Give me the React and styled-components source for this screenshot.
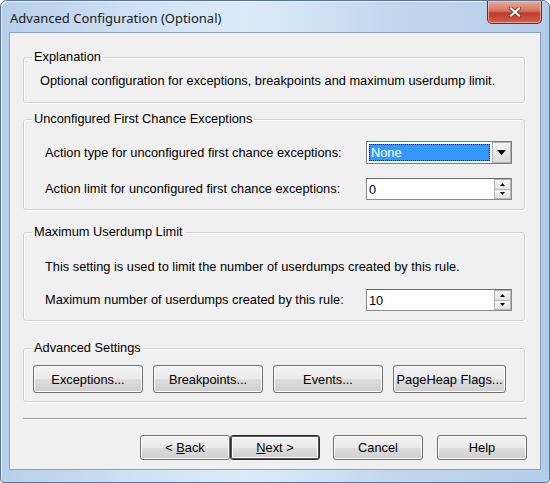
import React from "react";
import styled, { createGlobalStyle } from "styled-components";

const GlobalStyle = createGlobalStyle`
  html, body {
    margin: 0;
    padding: 0;
    background: #ffffff;
  }
  body {
    font-family: "Liberation Sans", Arial, sans-serif;
    font-size: 12.8px;
    color: #000;
  }
`;

const Frame = styled.div`
  width: 550px;
  height: 483px;
  box-sizing: border-box;
  display: flex;
  flex-direction: column;
  padding: 0 8px 12px 8px;
  border: 1px solid #5d7596;
  border-radius: 7px 7px 4px 4px;
  background: linear-gradient(
    to right,
    #b6cfea 0%,
    #cfe1f4 25%,
    #dcebf8 45%,
    #c3d8ef 70%,
    #b4cde9 100%
  );
  box-shadow: inset 1px 1px 0 #e8f1fa;
`;

const TitleBar = styled.div`
  height: 31px;
  display: flex;
  align-items: flex-start;
  justify-content: space-between;
`;

const Title = styled.div`
  font-family: "Noto Sans", "Open Sans", sans-serif;
  font-size: 13px;
  color: #1a1a1a;
  padding: 8px 0 0 1px;
`;

const CloseButton = styled.div`
  width: 55px;
  height: 23px;
  margin-right: -1px;
  box-sizing: border-box;
  border: 1px solid #6e2a22;
  border-top: none;
  border-radius: 0 0 5px 5px;
  background: linear-gradient(to bottom, #e9aa9c 0%, #d6725f 45%, #be3a2a 55%, #d2604a 100%);
  box-shadow: inset 0 0 0 1px rgba(255, 210, 200, 0.6);
  display: flex;
  align-items: center;
  justify-content: center;
`;

const Client = styled.div`
  flex: 1;
  display: flex;
  flex-direction: column;
  padding: 0 13px 0 13px;
  border: 1px solid #8aa0bd;
  background: #f0f0f0;
`;

const Group = styled.fieldset`
  margin: ${(p) => p.$top}px 2px 0 0;
  padding: 0 8px;
  border: 1px solid #cdd1d5;
  border-radius: 3px;
  box-shadow: inset 1px 1px 0 #fff, 1px 1px 0 #fff;
  min-width: 0;
`;

const Legend = styled.legend`
  padding: 0 2px;
  line-height: 14px;
  color: #000;
`;

const Body = styled.div`
  padding: ${(p) => p.$pad};
  display: flex;
  flex-direction: column;
  gap: ${(p) => p.$gap || 0}px;
`;

const Text = styled.div`
  line-height: 14px;
  white-space: nowrap;
`;

const Row = styled.div`
  display: grid;
  grid-template-columns: 1fr 146px;
  align-items: center;
  height: ${(p) => p.$h}px;
`;

const Combo = styled.div`
  height: 23px;
  box-sizing: border-box;
  border: 1px solid #7a7a7a;
  background: #fff;
  display: flex;
  align-items: stretch;
  padding: 2px;
  gap: 2px;
`;

const ComboValue = styled.div`
  flex: 1;
  background: #3399ff;
  color: #fff;
  outline: 1px dotted #000;
  outline-offset: -1px;
  padding-left: 2px;
  display: flex;
  align-items: center;
`;

const ComboArrow = styled.div`
  width: 17px;
  display: flex;
  align-items: center;
  justify-content: center;
  background: linear-gradient(to bottom, #f4f4f4, #dcdcdc);
  border: 1px solid #b0b0b0;
  margin: -2px -2px -2px 0;
`;

const Spin = styled.div`
  height: 22px;
  box-sizing: border-box;
  border: 1px solid #8b8b8b;
  border-top-color: #6b6b6b;
  background: #fff;
  display: flex;
`;

const SpinValue = styled.div`
  flex: 1;
  padding-left: 2px;
  display: flex;
  align-items: center;
`;

const SpinButtons = styled.div`
  width: 17px;
  display: flex;
  flex-direction: column;
`;

const SpinPart = styled.div`
  flex: 1;
  display: flex;
  align-items: center;
  justify-content: center;
  background: linear-gradient(to bottom, #f5f5f5, #e2e2e2);
  border: 1px solid #b5b5b5;
  margin: ${(p) => (p.$up ? "0" : "-1px 0 0 0")};
`;

const ButtonRow = styled.div`
  display: flex;
  gap: ${(p) => p.$gap}px;
  justify-content: ${(p) => p.$justify || "flex-start"};
  padding: ${(p) => p.$pad || 0};
  margin-top: ${(p) => p.$top || 0}px;
`;

const Button = styled.div`
  width: ${(p) => p.$w}px;
  height: ${(p) => p.$h}px;
  margin-left: ${(p) => p.$left || 0}px;
  box-sizing: border-box;
  border: 1px solid ${(p) => (p.$default ? "#2b2b2b" : "#707070")};
  box-shadow: ${(p) =>
    p.$default ? "inset 0 0 0 1px #555, inset 0 0 0 2px #fff" : "inset 0 0 0 1px #fcfcfc"};
  border-radius: 3px;
  background: linear-gradient(to bottom, #f2f2f2 0%, #ebebeb 50%, #dddddd 51%, #cfcfcf 100%);
  display: flex;
  align-items: center;
  justify-content: center;
  white-space: pre;
`;

const Separator = styled.div`
  margin-top: 16px;
  height: 0;
  border-top: 1px solid #a0a0a0;
  border-bottom: 1px solid #fff;
`;

const Key = styled.span`
  text-decoration: underline;
`;

const TriDown = ({ size = 4 }) => (
  <svg width={size * 2 + 1} height={size + 1} viewBox={`0 0 ${size * 2 + 1} ${size + 1}`}>
    <polygon points={`0,0 ${size * 2 + 1},0 ${size + 0.5},${size + 1}`} fill="#000" />
  </svg>
);

const TriUp = () => (
  <svg width="5" height="3" viewBox="0 0 5 3">
    <polygon points="0,3 5,3 2.5,0" fill="#000" />
  </svg>
);

const SpinBox = ({ value }) => (
  <Spin>
    <SpinValue>{value}</SpinValue>
    <SpinButtons>
      <SpinPart $up>
        <TriUp />
      </SpinPart>
      <SpinPart>
        <TriDown size={2} />
      </SpinPart>
    </SpinButtons>
  </Spin>
);

const App = () => {
  return (
    <>
      <GlobalStyle />
      <Frame>
        <TitleBar>
          <Title>Advanced Configuration (Optional)</Title>
          <CloseButton>
            <svg width="12" height="10" viewBox="0 0 12 10">
              <path
                d="M2 1.5 L10 8.5 M10 1.5 L2 8.5"
                stroke="#6a2418"
                strokeWidth="3.6"
                strokeLinecap="square"
              />
              <path
                d="M2 1.5 L10 8.5 M10 1.5 L2 8.5"
                stroke="#fff"
                strokeWidth="2.2"
                strokeLinecap="square"
              />
            </svg>
          </CloseButton>
        </TitleBar>

        <Client>
          <Group $top={17}>
            <Legend>Explanation</Legend>
            <Body $pad="10px 0 14px 8px">
              <Text>
                Optional configuration for exceptions, breakpoints and maximum userdump limit.
              </Text>
            </Body>
          </Group>

          <Group $top={9}>
            <Legend>Unconfigured First Chance Exceptions</Legend>
            <Body $pad="15px 4px 9px 13px" $gap={14}>
              <Row $h={23}>
                <Text>Action type for unconfigured first chance exceptions:</Text>
                <Combo>
                  <ComboValue>None</ComboValue>
                  <ComboArrow>
                    <TriDown />
                  </ComboArrow>
                </Combo>
              </Row>
              <Row $h={22}>
                <Text>Action limit for unconfigured first chance exceptions:</Text>
                <SpinBox value="0" />
              </Row>
            </Body>
          </Group>

          <Group $top={15}>
            <Legend>Maximum Userdump Limit</Legend>
            <Body $pad="21px 4px 9px 13px" $gap={15}>
              <Text>This setting is used to limit the number of userdumps created by this rule.</Text>
              <Row $h={22}>
                <Text>Maximum number of userdumps created by this rule:</Text>
                <SpinBox value="10" />
              </Row>
            </Body>
          </Group>

          <Group $top={20}>
            <Legend>Advanced Settings</Legend>
            <ButtonRow $gap={10} $pad="10px 0 8px 1px">
              <Button $w={110} $h={28}>Exceptions...</Button>
              <Button $w={110} $h={28}>Breakpoints...</Button>
              <Button $w={110} $h={28}>Events...</Button>
              <Button $w={113} $h={28}>PageHeap Flags...</Button>
            </ButtonRow>
          </Group>

          <Separator />

          <ButtonRow $gap={0} $justify="flex-end" $top={15}>
            <Button $w={90} $h={25}>
              <span>
                &lt; <Key>B</Key>ack
              </span>
            </Button>
            <Button $w={90} $h={25} $default>
              <span>
                <Key>N</Key>ext &gt;
              </span>
            </Button>
            <Button $w={90} $h={25} $left={13}>
              Cancel
            </Button>
            <Button $w={90} $h={25} $left={14}>
              Help
            </Button>
          </ButtonRow>
        </Client>
      </Frame>
    </>
  );
};

export default App;
